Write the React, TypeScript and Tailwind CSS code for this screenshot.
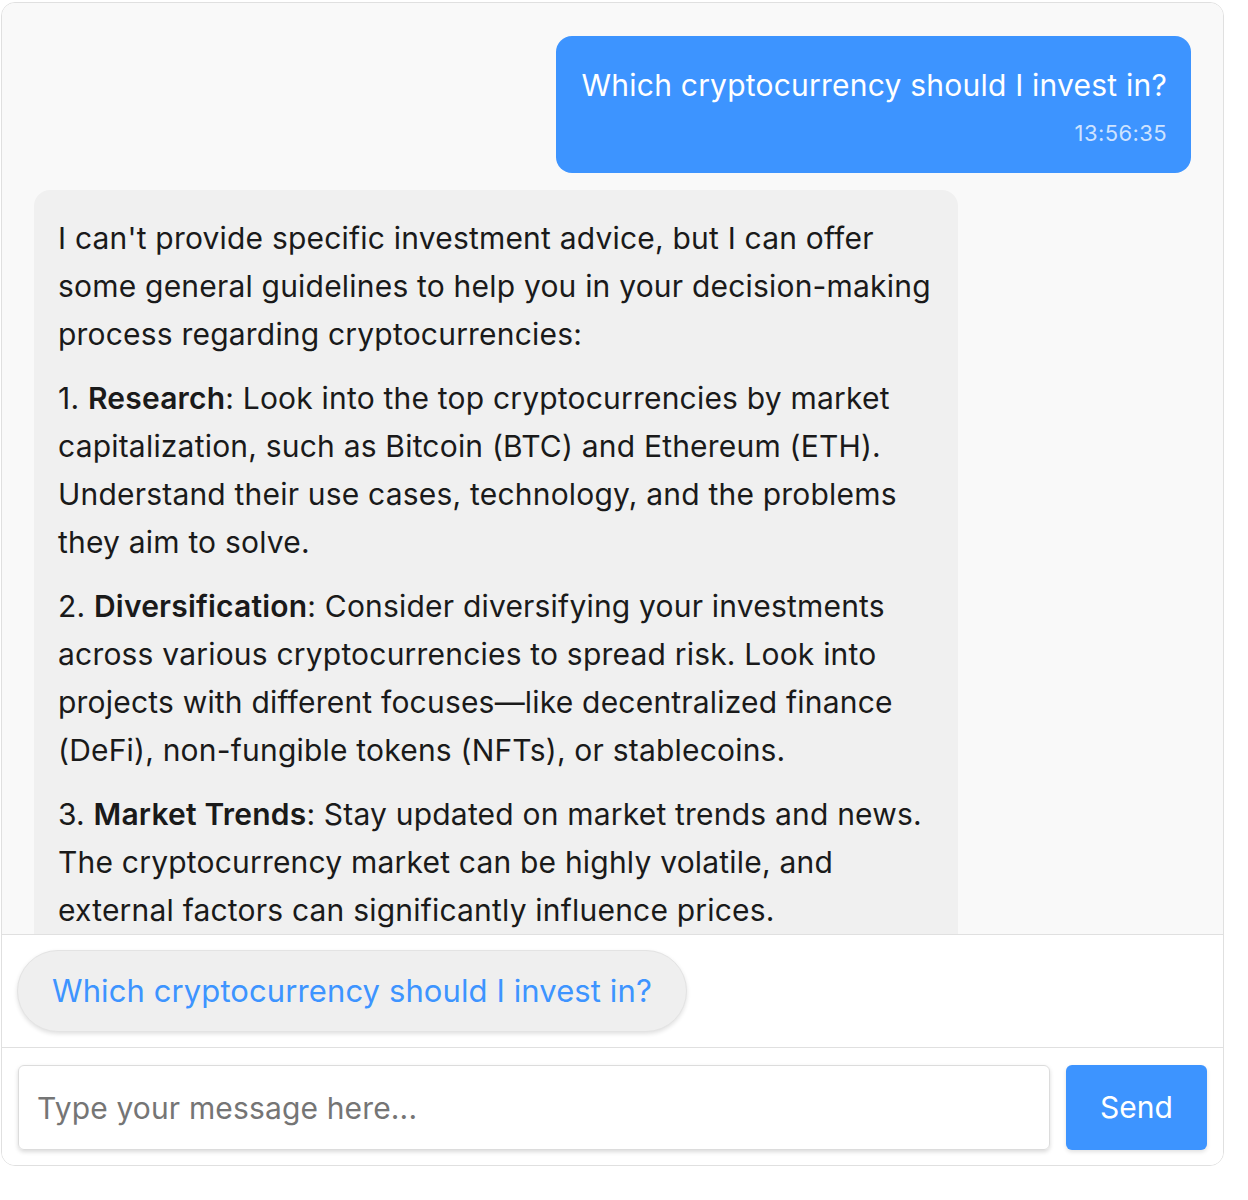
import React, { useState } from 'react';

const points = [
  {
    title: 'Research',
    body: 'Look into the top cryptocurrencies by market capitalization, such as Bitcoin (BTC) and Ethereum (ETH). Understand their use cases, technology, and the problems they aim to solve.',
  },
  {
    title: 'Diversification',
    body: 'Consider diversifying your investments across various cryptocurrencies to spread risk. Look into projects with different focuses\u2014like decentralized finance (DeFi), non-fungible tokens (NFTs), or stablecoins.',
  },
  {
    title: 'Market Trends',
    body: 'Stay updated on market trends and news. The cryptocurrency market can be highly volatile, and external factors can significantly influence prices.',
  },
  {
    title: 'Risk Management',
    body: 'Only invest what you can afford to lose, and consider setting stop-loss orders to limit potential losses.',
  },
];

export default function App() {
  const [input, setInput] = useState('');
  const question = 'Which cryptocurrency should I invest in?';

  return (
    <div className="bg-white" style={{ fontFamily: 'Inter, "Noto Sans", sans-serif' }}>
      <div className="ml-[1px] pt-[2px] w-[1223px]">
        <div className="h-[1164px] border border-[#e0e0e0] rounded-[14px] overflow-hidden flex flex-col">
          {/* messages */}
          <div className="h-[932px] shrink-0 bg-[#f9f9f9] px-[32px] pt-[33px] overflow-hidden flex flex-col gap-[17px] border-b border-[#e0e0e0]">
            <div className="flex justify-end">
              <div className="bg-[#3d94ff] text-white rounded-[16px] pl-[26px] pr-[24px] pt-[29px] pb-[26px] max-w-[80%]">
                <div className="text-[30px] leading-[40px] tracking-[0.22px]">{question}</div>
                <div className="text-right text-[22px] leading-[28px] tracking-[0.4px] mt-[14px] text-white/75">13:56:35</div>
              </div>
            </div>
            <div className="flex justify-start">
              <div className="bg-[#f0f0f0] text-[#1a1a1a] rounded-[16px] pl-[24px] pr-[18px] pt-[24px] pb-[24px] w-[924px] tracking-[0.2px]">
                <p className="text-[30px] leading-[48px]">
                  I can't provide specific investment advice, but I can offer some general guidelines to help you in your decision-making process regarding cryptocurrencies:
                </p>
                {points.map((p, i) => (
                  <p key={p.title} className="text-[30px] leading-[48px] mt-[16px]">
                    {i + 1}. <strong className="font-semibold">{p.title}</strong>: {p.body}
                  </p>
                ))}
              </div>
            </div>
          </div>

          {/* suggestions */}
          <div className="h-[113px] shrink-0 bg-white pl-[15px] pt-[15px] border-b border-[#e0e0e0] flex items-start">
            <button className="bg-[#efefef] text-[#3d94ff] text-[31px] leading-[48px] tracking-[0.1px] whitespace-nowrap rounded-full border border-[#e3e3e3] px-[34px] py-[16px] shadow-[0_2px_4px_rgba(0,0,0,0.12)]">
              {question}
            </button>
          </div>

          {/* input */}
          <div className="flex-1 bg-white px-[16px] pt-[17px] flex gap-[16px]">
            <input
              value={input}
              onChange={(e) => setInput(e.target.value)}
              placeholder="Type your message here..."
              className="flex-1 h-[85px] border border-[#dcdcdc] rounded-[6px] px-[18px] text-[30px] tracking-[0.15px] text-[#222] placeholder:text-[#757575] outline-none shadow-[0_2px_4px_rgba(0,0,0,0.15)]"
            />
            <button className="w-[141px] h-[85px] bg-[#3d94ff] text-white text-[30px] rounded-[6px] shadow-[0_2px_4px_rgba(0,0,0,0.12)]">
              Send
            </button>
          </div>
        </div>
      </div>
    </div>
  );
}
